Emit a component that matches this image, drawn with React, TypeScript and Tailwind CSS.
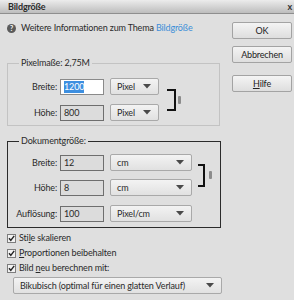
import React from 'react';

const Arrow: React.FC = () => (
  <svg width="8" height="5" viewBox="0 0 8 5" className="shrink-0">
    <path d="M0 0 H8 L4 4.5 Z" fill="#4a4a4a" />
  </svg>
);

const Select: React.FC<{ value: string; className: string }> = ({ value, className }) => (
  <div
    className={`h-[17px] flex items-center justify-between pl-[6px] pr-[7px] border border-[#a9a9a9] rounded-[2px] bg-gradient-to-b from-[#f3f3f3] to-[#e1e1e1] text-[#2a2a2a] ${className}`}
  >
    <span className="whitespace-nowrap">{value}</span>
    <Arrow />
  </div>
);

const Btn: React.FC<{ children: React.ReactNode; className?: string }> = ({ children, className = '' }) => (
  <button
    className={`w-[60px] h-[17px] flex items-center justify-center border border-[#a3a3a3] rounded-[2px] bg-gradient-to-b from-[#f4f4f4] to-[#dedede] text-[#222] ${className}`}
  >
    {children}
  </button>
);

const Bracket: React.FC<{ w: number; h: number }> = ({ w, h }) => (
  <svg width={w} height={h} viewBox={`0 0 ${w} ${h}`} className="shrink-0">
    <path d={`M0 1 H${w - 1} V${h - 1} H0`} fill="none" stroke="#111" strokeWidth="2" />
  </svg>
);

const Grip: React.FC = () => <div className="w-[3px] h-[8px] rounded-[1px] bg-[#8c8c8c] shrink-0" />;

const Field: React.FC<{ label: string; value: string; focused?: boolean }> = ({ label, value, focused }) => (
  <div className="flex items-center h-[16px]">
    <span className="w-[50px] text-right pr-[1px] text-[#2a2a2a]">{label}</span>
    <div
      className={`ml-[2px] w-[44px] h-[16px] flex items-center pl-[3px] border ${
        focused ? 'bg-white border-[#8a8a8a]' : 'bg-[#dcdcdc] border-[#6e6e6e]'
      }`}
    >
      {focused ? <span className="bg-[#3d8fe0] text-white leading-[12px]">{value}</span> : <span className="text-[#2a2a2a]">{value}</span>}
    </div>
  </div>
);

const Check: React.FC<{ children: React.ReactNode }> = ({ children }) => (
  <div className="flex items-center h-[14px] gap-[3px]">
    <svg width="9" height="9" viewBox="0 0 9 9" className="shrink-0">
      <rect x="0.5" y="0.5" width="8" height="8" fill="#f2f2f2" stroke="#7d7d7d" />
      <path d="M2 4.3 L3.8 6.3 L7.2 1.8" fill="none" stroke="#222" strokeWidth="1.4" />
    </svg>
    <span className="text-[#2a2a2a]">{children}</span>
  </div>
);

export default function App() {
  return (
    <div className="w-[294px] h-[300px] overflow-hidden bg-[#dfdfdf] font-['Lato',sans-serif] text-[9px] leading-[12px] tracking-[-0.15px]">
      {/* Title bar */}
      <div className="h-[14px] flex items-center justify-between pl-[8px] pr-[2px] bg-gradient-to-b from-[#ececec] to-[#bdbdbd] border-b border-[#8e8e8e]">
        <span className="font-bold text-[#2b2b2b]">Bildgröße</span>
        <span className="text-[#333] font-bold">x</span>
      </div>

      <div className="flex pl-[7px]">
        {/* Left column */}
        <div className="w-[213px]">
          {/* Info row */}
          <div className="flex items-center gap-[5px] mt-[8px] h-[12px]">
            <div className="w-[9px] h-[9px] rounded-full bg-[#5b5b5b] text-white text-[7px] leading-[9px] font-bold flex items-center justify-center">?</div>
            <span className="text-[#2a2a2a]">
              Weitere Informationen zum Thema <span className="text-[#3b8ed8]">Bildgröße</span>
            </span>
          </div>

          {/* Pixelmaße */}
          <fieldset className="mt-[23px] border border-[#c3c3c3] pt-[9px] pb-[4px]">
            <legend className="ml-[11px] px-[2px] text-[#2a2a2a]">Pixelmaße: 2,75M</legend>
            <div className="flex items-center">
              <div className="flex flex-col gap-[9px]">
                <div className="flex items-center">
                  <Field label="Breite:" value="1200" focused />
                  <Select value="Pixel" className="ml-[6px] w-[49px]" />
                </div>
                <div className="flex items-center">
                  <Field label="Höhe:" value="800" />
                  <Select value="Pixel" className="ml-[6px] w-[49px]" />
                </div>
              </div>
              <div className="ml-[8px]">
                <Bracket w={9} h={22} />
              </div>
              <div className="ml-[2px]">
                <Grip />
              </div>
            </div>
          </fieldset>

          {/* Dokumentgröße */}
          <fieldset className="mt-[9px] w-[214px] border border-[#2b2b2b] pt-[7px] pb-[5px]">
            <legend className="ml-[11px] px-[2px] text-[#2a2a2a]">Dokumentgröße:</legend>
            <div className="flex items-center">
              <div className="flex flex-col gap-[8px]">
                <div className="flex items-center">
                  <Field label="Breite:" value="12" />
                  <Select value="cm" className="ml-[6px] w-[82px]" />
                </div>
                <div className="flex items-center">
                  <Field label="Höhe:" value="8" />
                  <Select value="cm" className="ml-[6px] w-[82px]" />
                </div>
              </div>
              <div className="ml-[6px]">
                <Bracket w={7} h={23} />
              </div>
              <div className="ml-[4px]">
                <Grip />
              </div>
            </div>
            <div className="flex items-center mt-[9px]">
              <Field label="Auflösung:" value="100" />
              <Select value="Pixel/cm" className="ml-[6px] w-[82px]" />
            </div>
          </fieldset>

          {/* Checkboxes */}
          <div className="mt-[3px] flex flex-col gap-[1px]">
            <Check>
              Sti<span className="underline">l</span>e skalieren
            </Check>
            <Check>
              <span className="underline">P</span>roportionen beibehalten
            </Check>
            <Check>
              Bild <span className="underline">n</span>eu berechnen mit:
            </Check>
          </div>

          <Select value="Bikubisch (optimal für einen glatten Verlauf)" className="mt-[2px] ml-[6px] w-[209px]" />
        </div>

        {/* Right column */}
        <div className="ml-[12px] mt-[8px] flex flex-col">
          <Btn>OK</Btn>
          <Btn className="mt-[7px]">Abbrechen</Btn>
          <Btn className="mt-[12px]">
            <span className="underline">H</span>ilfe
          </Btn>
        </div>
      </div>
    </div>
  );
}
